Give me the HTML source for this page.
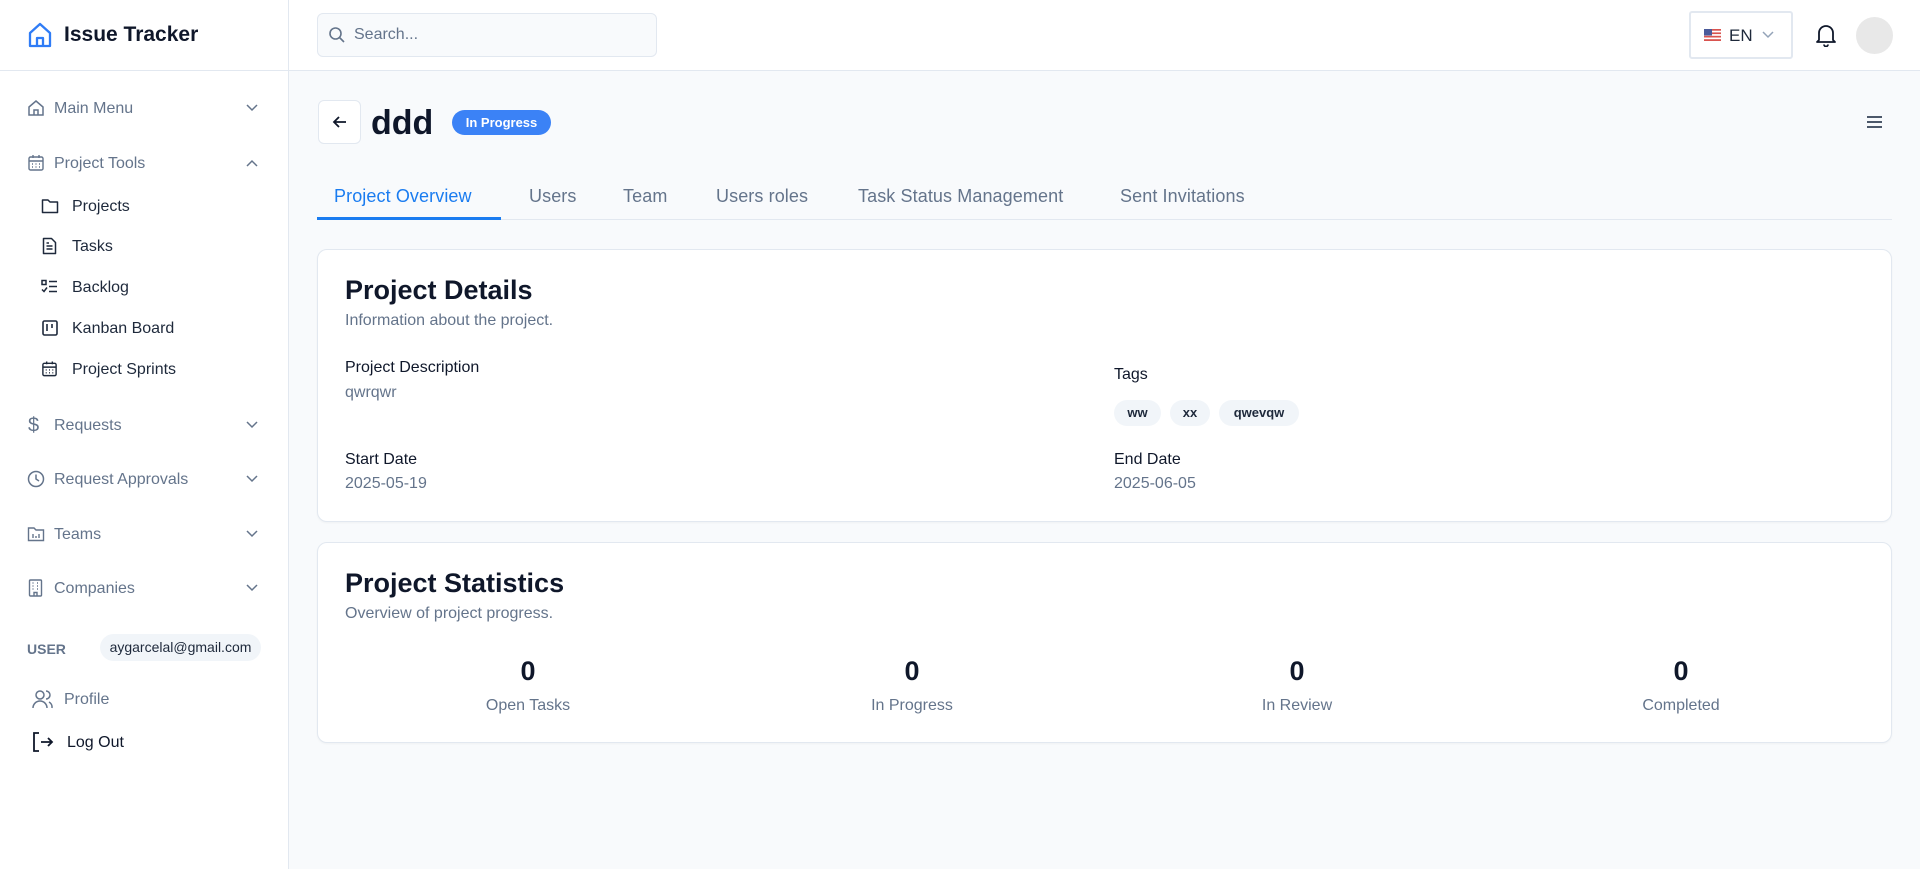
<!DOCTYPE html>
<html><head><meta charset="utf-8"><style>
*{box-sizing:border-box;margin:0;padding:0}
body{width:1920px;height:869px;overflow:hidden;background:#f8fafc;font-family:"Liberation Sans",sans-serif;color:#0f172a;position:relative}
.a{position:absolute;white-space:nowrap}
.side{position:absolute;left:0;top:0;width:289px;height:869px;background:#fff;border-right:1px solid #e2e8f0}
.hdr{position:absolute;left:289px;top:0;right:0;height:71px;background:#fff;border-bottom:1px solid #e2e8f0}
.sbh{position:absolute;left:0;top:70px;width:289px;border-top:1px solid #e2e8f0}
.mi{font-size:16px;color:#64748b;transform:translateY(-45%)}
.si{font-size:16px;color:#1e293b;transform:translateY(-45%)}
.ic{position:absolute;transform:translateY(-50%)}
.card{position:absolute;left:317px;width:1575px;background:#fff;border:1px solid #e2e8f0;border-radius:10px;box-shadow:0 1px 2px rgba(0,0,0,.04)}
.lbl{font-size:16px;color:#0f172a}
.val{font-size:16px;color:#64748b}
.chip{position:absolute;top:400px;height:26px;border-radius:13px;background:#f1f5f9;font-size:13px;font-weight:bold;color:#1e293b;line-height:26px;text-align:center}
.tab{font-size:18px;color:#64748b;top:186px;letter-spacing:0.1px}
.num{font-size:27px;font-weight:bold;transform:translateX(-50%);top:656px}
.nl{font-size:16px;color:#64748b;transform:translateX(-50%);top:697px}
</style></head><body>
<div class="side"></div>
<div class="hdr"></div>
<div class="sbh"></div>

<svg class="a" style="left:28px;top:22px" width="24" height="26" viewBox="0 0 24 26" fill="none" stroke="#2f7cf6" stroke-width="2.3" stroke-linejoin="round"><path d="M2 11 L12 2 L22 11 V24 H2 Z"/><path d="M9 24 V16 H15 V24"/></svg>
<div class="a" style="left:64px;top:23px;font-size:21px;font-weight:bold;color:#0f172a">Issue Tracker</div>

<div class="a" style="left:317px;top:13px;width:340px;height:44px;border:1px solid #e2e8f0;border-radius:6px;background:#f8fafc"></div>
<svg class="a" style="left:328px;top:26px" width="18" height="18" viewBox="0 0 18 18" fill="none" stroke="#64748b" stroke-width="1.6"><circle cx="7.5" cy="7.5" r="5.5"/><path d="M11.5 11.5 L16 16"/></svg>
<div class="a" style="left:354px;top:26px;font-size:16px;color:#64748b">Search...</div>

<div class="a" style="left:1689px;top:11px;width:104px;height:48px;border:2px solid #e2e8f0;background:#fff;border-radius:3px"></div>
<svg class="a" style="left:1704px;top:29px" width="17" height="12" viewBox="0 0 17 12"><rect width="17" height="12" fill="#fff"/><g fill="#d9534f"><rect y="0" width="17" height="1.7"/><rect y="3.4" width="17" height="1.7"/><rect y="6.8" width="17" height="1.7"/><rect y="10.2" width="17" height="1.8"/></g><rect width="8" height="6.5" fill="#4a5a9a"/></svg>
<div class="a" style="left:1729px;top:26px;font-size:17px;color:#1e293b">EN</div>
<svg class="a" style="left:1762px;top:31px" width="12" height="8" viewBox="0 0 12 8" fill="none" stroke="#94a3b8" stroke-width="1.5"><path d="M1 1 L6 6 L11 1"/></svg>
<svg class="a" style="left:1815px;top:23px" width="22" height="24" viewBox="0 0 22 24" fill="none" stroke="#0f172a" stroke-width="1.8" stroke-linejoin="round"><path d="M4 17 V10 a7 7 0 0 1 14 0 V17 L20 19 H2 Z"/><path d="M9 21.5 a2 2 0 0 0 4 0"/></svg>
<div class="a" style="left:1856px;top:17px;width:37px;height:37px;border-radius:50%;background:#e8e8e8"></div>

<!-- sidebar menu -->
<svg class="ic a" style="left:27px;top:108px" width="18" height="18" viewBox="0 0 18 18" fill="none" stroke="#64748b" stroke-width="1.5"><path d="M2 8 L9 2 L16 8 V16 H2 Z"/><path d="M7 16 V11 H11 V16"/></svg>
<div class="a mi" style="left:54px;top:108px">Main Menu</div>
<svg class="ic a" style="left:246px;top:108px" width="12" height="8" viewBox="0 0 12 8" fill="none" stroke="#64748b" stroke-width="1.5"><path d="M1 1 L6 6 L11 1"/></svg>

<svg class="ic a" style="left:27px;top:163px" width="18" height="18" viewBox="0 0 18 18" fill="none" stroke="#64748b" stroke-width="1.4"><rect x="2" y="3" width="14" height="13" rx="1.5"/><path d="M2 7 H16 M6 1 V4 M12 1 V4 M5 10 h1 M8.5 10 h1 M12 10 h1 M5 13 h1 M8.5 13 h1 M12 13 h1"/></svg>
<div class="a mi" style="left:54px;top:163px">Project Tools</div>
<svg class="ic a" style="left:246px;top:163px" width="12" height="8" viewBox="0 0 12 8" fill="none" stroke="#64748b" stroke-width="1.5"><path d="M1 7 L6 2 L11 7"/></svg>

<svg class="ic a" style="left:41px;top:206px" width="18" height="16" viewBox="0 0 18 16" fill="none" stroke="#1e293b" stroke-width="1.5" stroke-linejoin="round"><path d="M1.5 2 H7 L9 4 H16.5 V14.5 H1.5 Z"/></svg>
<div class="a si" style="left:72px;top:206px">Projects</div>
<svg class="ic a" style="left:42px;top:246px" width="15" height="18" viewBox="0 0 15 18" fill="none" stroke="#1e293b" stroke-width="1.5" stroke-linejoin="round"><path d="M1.5 1.5 H9.5 L13.5 5.5 V16.5 H1.5 Z"/><path d="M4.5 9 H10.5 M4.5 12 H10.5 M4.5 6 H7"/></svg>
<div class="a si" style="left:72px;top:246px">Tasks</div>
<svg class="ic a" style="left:41px;top:287px" width="17" height="15" viewBox="0 0 17 15" fill="none" stroke="#1e293b" stroke-width="1.5"><rect x="1" y="1" width="4" height="4"/><path d="M1 10 L3 12 L6 8 M8 2 H16 M8 7 H16 M8 12 H16"/></svg>
<div class="a si" style="left:72px;top:287px">Backlog</div>
<svg class="ic a" style="left:42px;top:328px" width="16" height="16" viewBox="0 0 16 16" fill="none" stroke="#1e293b" stroke-width="1.6"><rect x="1" y="1" width="14" height="14" rx="1.5"/><path d="M5 4 V11 M10 4 V8"/></svg>
<div class="a si" style="left:72px;top:328px">Kanban Board</div>
<svg class="ic a" style="left:41px;top:369px" width="17" height="18" viewBox="0 0 18 18" fill="none" stroke="#1e293b" stroke-width="1.5"><rect x="2" y="3" width="14" height="13" rx="1.5"/><path d="M2 7 H16 M6 1 V4 M12 1 V4 M5 10 h1 M8.5 10 h1 M12 10 h1 M5 13 h1 M8.5 13 h1 M12 13 h1"/></svg>
<div class="a si" style="left:72px;top:369px">Project Sprints</div>

<div class="a mi" style="left:28px;top:425px;font-size:20px">$</div>
<div class="a mi" style="left:54px;top:425px">Requests</div>
<svg class="ic a" style="left:246px;top:425px" width="12" height="8" viewBox="0 0 12 8" fill="none" stroke="#64748b" stroke-width="1.5"><path d="M1 1 L6 6 L11 1"/></svg>
<svg class="ic a" style="left:27px;top:479px" width="18" height="18" viewBox="0 0 18 18" fill="none" stroke="#64748b" stroke-width="1.5"><circle cx="9" cy="9" r="7.5"/><path d="M9 4.5 V9 L12 11"/></svg>
<div class="a mi" style="left:54px;top:479px">Request Approvals</div>
<svg class="ic a" style="left:246px;top:479px" width="12" height="8" viewBox="0 0 12 8" fill="none" stroke="#64748b" stroke-width="1.5"><path d="M1 1 L6 6 L11 1"/></svg>
<svg class="ic a" style="left:27px;top:534px" width="18" height="16" viewBox="0 0 18 16" fill="none" stroke="#64748b" stroke-width="1.4"><path d="M1.5 2 H7 L9 4 H16.5 V14.5 H1.5 Z"/><path d="M6 8 V12 M9 10 V12 M12 8 V12"/></svg>
<div class="a mi" style="left:54px;top:534px">Teams</div>
<svg class="ic a" style="left:246px;top:534px" width="12" height="8" viewBox="0 0 12 8" fill="none" stroke="#64748b" stroke-width="1.5"><path d="M1 1 L6 6 L11 1"/></svg>
<svg class="ic a" style="left:28px;top:588px" width="15" height="18" viewBox="0 0 15 18" fill="none" stroke="#64748b" stroke-width="1.4"><rect x="1.5" y="1" width="12" height="16" rx="1"/><path d="M4.5 4 h1 M9 4 h1 M4.5 7 h1 M9 7 h1 M4.5 10 h1 M9 10 h1 M6 17 V13.5 H9 V17"/></svg>
<div class="a mi" style="left:54px;top:588px">Companies</div>
<svg class="ic a" style="left:246px;top:588px" width="12" height="8" viewBox="0 0 12 8" fill="none" stroke="#64748b" stroke-width="1.5"><path d="M1 1 L6 6 L11 1"/></svg>

<div class="a" style="left:27px;top:641px;font-size:14px;font-weight:bold;color:#64748b">USER</div>
<div class="a" style="left:100px;top:634px;width:161px;height:27px;border-radius:14px;background:#f1f5f9;font-size:14px;color:#1e293b;line-height:27px;text-align:center">aygarcelal@gmail.com</div>
<svg class="ic a" style="left:32px;top:699px" width="22" height="20" viewBox="0 0 22 20" fill="none" stroke="#64748b" stroke-width="1.5"><circle cx="8" cy="6" r="4"/><path d="M1 19 a7 7 0 0 1 14 0 M14 2 a4 4 0 0 1 0 8 M17 13 a6 6 0 0 1 3 6"/></svg>
<div class="a mi" style="left:64px;top:699px">Profile</div>
<svg class="ic a" style="left:32px;top:742px" width="22" height="22" viewBox="0 0 22 22" fill="none" stroke="#0f172a" stroke-width="1.8"><path d="M7 2 H2 V20 H7 M9 11 H20 M16 7 L20 11 L16 15"/></svg>
<div class="a si" style="left:67px;top:742px;color:#0f172a">Log Out</div>

<!-- page header -->
<div class="a" style="left:318px;top:100px;width:43px;height:44px;border:1px solid #e2e8f0;border-radius:6px;background:#fff"></div>
<svg class="a" style="left:332px;top:114px" width="16" height="16" viewBox="0 0 16 16" fill="none" stroke="#0f172a" stroke-width="1.8"><path d="M14 8 H2 M7 3 L2 8 L7 13"/></svg>
<div class="a" style="left:371px;top:104px;font-size:34px;font-weight:bold;color:#0f172a">ddd</div>
<div class="a" style="left:452px;top:110px;width:99px;height:25px;border-radius:13px;background:#3b82f6;color:#fff;font-size:13px;font-weight:bold;text-align:center;line-height:25px">In Progress</div>
<svg class="a" style="left:1866px;top:115px" width="17" height="14" viewBox="0 0 17 14" fill="none" stroke="#334155" stroke-width="1.8"><path d="M1 2 H16 M1 7 H16 M1 12 H16"/></svg>

<!-- tabs -->
<div class="a" style="left:317px;top:219px;width:1575px;border-top:1px solid #e2e8f0"></div>
<div class="a" style="left:317px;top:217px;width:184px;height:3px;background:#1a7cf0"></div>
<div class="a tab" style="left:334px;color:#1a7cf0">Project Overview</div>
<div class="a tab" style="left:529px">Users</div>
<div class="a tab" style="left:623px">Team</div>
<div class="a tab" style="left:716px">Users roles</div>
<div class="a tab" style="left:858px">Task Status Management</div>
<div class="a tab" style="left:1120px">Sent Invitations</div>

<!-- card 1 -->
<div class="card" style="top:249px;height:273px"></div>
<div class="a" style="left:345px;top:275px;font-size:27px;font-weight:bold">Project Details</div>
<div class="a val" style="left:345px;top:312px">Information about the project.</div>
<div class="a lbl" style="left:345px;top:359px">Project Description</div>
<div class="a val" style="left:345px;top:384px">qwrqwr</div>
<div class="a lbl" style="left:1114px;top:366px">Tags</div>
<div class="chip" style="left:1114px;width:47px">ww</div>
<div class="chip" style="left:1170px;width:40px">xx</div>
<div class="chip" style="left:1219px;width:80px">qwevqw</div>
<div class="a lbl" style="left:345px;top:451px">Start Date</div>
<div class="a val" style="left:345px;top:475px">2025-05-19</div>
<div class="a lbl" style="left:1114px;top:451px">End Date</div>
<div class="a val" style="left:1114px;top:475px">2025-06-05</div>

<!-- card 2 -->
<div class="card" style="top:542px;height:201px"></div>
<div class="a" style="left:345px;top:568px;font-size:27px;font-weight:bold">Project Statistics</div>
<div class="a val" style="left:345px;top:605px">Overview of project progress.</div>
<div class="a num" style="left:528px">0</div><div class="a nl" style="left:528px">Open Tasks</div>
<div class="a num" style="left:912px">0</div><div class="a nl" style="left:912px">In Progress</div>
<div class="a num" style="left:1297px">0</div><div class="a nl" style="left:1297px">In Review</div>
<div class="a num" style="left:1681px">0</div><div class="a nl" style="left:1681px">Completed</div>
</body></html>
